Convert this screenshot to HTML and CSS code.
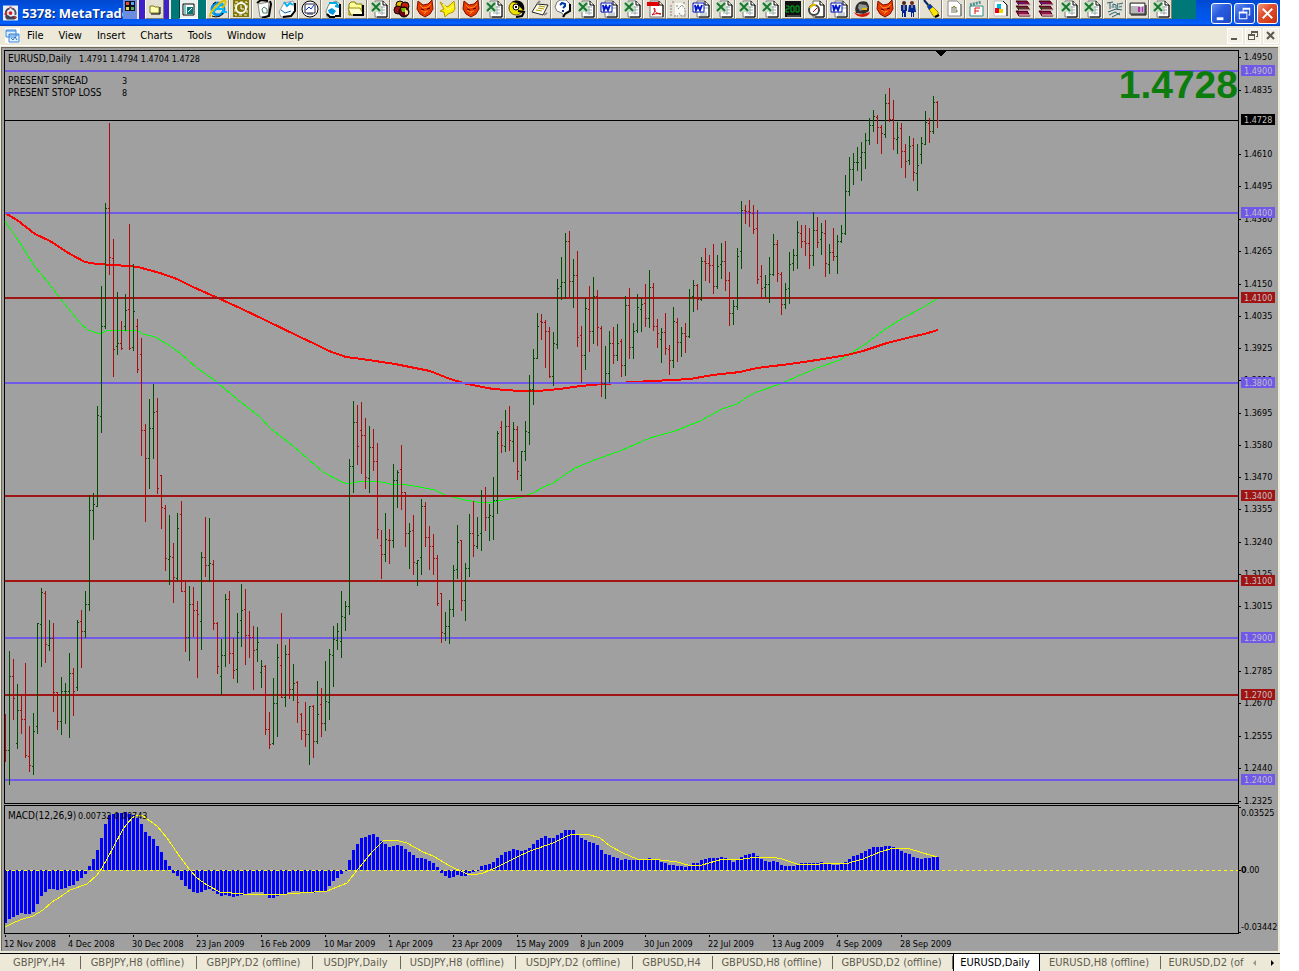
FILE: index.html
```
<!DOCTYPE html>
<html lang="en">
  <head>
    <meta charset="UTF-8">
    <meta name="viewport" content="width=device-width, initial-scale=1.0">
    <title>5378: MetaTrader</title>
    <link rel="stylesheet" href="styles.css">
  </head>

  <body>
    <!-- Icon set for the shortcut bar -->
    <svg class="icon-defs" aria-hidden="true">
      <symbol id="i-ie" viewBox="0 0 18 18"><circle cx="9" cy="9" r="6" fill="none" stroke="#0090e8" stroke-width="3"/><path d="M5 9h9v3h4M3 13L14 3" stroke="#00b8ff" stroke-width="2" fill="none"/><path d="M1 17C0 12 12 0 16 1c2 1-1 5-3 7" stroke="#e0c000" stroke-width="2" fill="none"/><path d="M3 16c5 2 10 0 11-3M4 4l3-2" stroke="#000" fill="none"/></symbol>
      <symbol id="i-clock" viewBox="0 0 18 18"><path d="M1 0h16v17H1z" fill="#807800"/><path d="M3 2h12v13H3z" fill="none" stroke="#fff" stroke-dasharray="3 2"/><circle cx="9" cy="8" r="5" fill="#807800" stroke="#fff" stroke-width="2"/><path d="M9 5v4h3" stroke="#fff" fill="none"/></symbol>
      <symbol id="i-bin" viewBox="0 0 18 18"><path d="M3 4l11-2-1 14-8 1z" fill="#fff" stroke="#888"/><path d="M15 1l1 3-2 12-7 2M2 3l4-3 7 1" fill="none" stroke="#000" stroke-width="2"/><path d="M7 9l2-2 3 2v4H8z" fill="none" stroke="#4a8868"/></symbol>
      <symbol id="i-net" viewBox="0 0 18 18"><path d="M6 3l9-2 2 9-4 6-10 1-2-5z" fill="#fff" stroke="#99a"/><path d="M6 2l3 4 3-3 3 2" stroke="#08b0f0" stroke-width="2" fill="none"/><path d="M3 10l4 3 6-2" stroke="#0066c0" fill="none" stroke-width="1"/><path d="M17 3v8l-4 5-8 1" stroke="#000" stroke-width="2" fill="none"/></symbol>
      <symbol id="i-net2" viewBox="0 0 18 18"><path d="M5 4l7-3 4 3v12l-13 1-1-6z" fill="#fff" stroke="#788"/><path d="M5 3h7l3 4-4-1" stroke="#00a8e8" stroke-width="2" fill="none"/><path d="M4 10l4-2 4 3-3 4-4-2" fill="#0099e0"/><path d="M16 4v12h-5M3 14l3 3h5" stroke="#000" stroke-width="2" fill="none"/></symbol>
      <symbol id="i-chart" viewBox="0 0 18 18"><circle cx="9" cy="9" r="8" fill="#fff" stroke="#000"/><path d="M4 4h10v9H4zM6 14h6" fill="#fff" stroke="#224"/><path d="M5 10l3-3 2 2 3-4" fill="none" stroke="#0038d0"/></symbol>
      <symbol id="i-folder" viewBox="0 0 18 18"><path d="M2 15V4l2-2h4l1 2h6v10z" fill="#ffff9c" stroke="#807800"/><path d="M1 8h12l4 7H4z" fill="#ffffd0" stroke="#998c00"/><path d="M16 5v10H6" stroke="#000" stroke-width="2" fill="none"/></symbol>
      <symbol id="i-excel" viewBox="0 0 18 18"><path d="M5 1h8l4 4v12H5z" fill="#fff" stroke="#777"/><path d="M13 1v4h4v12H7" stroke="#000" fill="none"/><path d="M8 7h7M8 10h7M8 13h7M12 6v9" stroke="#9aa"/><path d="M1 2h10v10H1z" fill="#c8dcc4"/><path d="M2 3l8 8M10 3l-8 8" stroke="#187830" stroke-width="2"/></symbol>
      <symbol id="i-word" viewBox="0 0 18 18"><path d="M5 1h8l4 4v12H5z" fill="#fff" stroke="#777"/><path d="M13 1v4h4v12H7" stroke="#000" fill="none"/><path d="M8 13h7M8 15h7M12 8h4" stroke="#9aa"/><path d="M1 3h11v9H1z" fill="#fff" stroke="#0010b0"/><path d="M3 5l1 5 2-4 2 4 2-5" fill="none" stroke="#0018d0" stroke-width="2"/></symbol>
      <symbol id="i-balls" viewBox="0 0 18 18"><circle cx="7" cy="5" r="4" fill="#e8b800" stroke="#000"/><circle cx="12" cy="6" r="4" fill="#c02010" stroke="#000"/><circle cx="5" cy="10" r="4" fill="#a01010" stroke="#000"/><circle cx="11" cy="12" r="5" fill="#700018" stroke="#000"/><path d="M8 8h5v4H9z" fill="#70c000"/><path d="M12 9l3 2v3l-3 1z" fill="#f0e890"/></symbol>
      <symbol id="i-fox" viewBox="0 0 18 18"><path d="M2 1l5 4 5-1 4-4 1 9-3 5-5 3-5-3-3-5z" fill="#e83800" stroke="#801000"/><path d="M4 5l3 3 5-1 3-3M5 10l3 2 4-1M8 14l2-2" stroke="#ff9020" fill="none"/><path d="M5 9l3 1M11 9l3-1" stroke="#300" stroke-width="1"/></symbol>
      <symbol id="i-foxy" viewBox="0 0 18 18"><path d="M1 2l7 5 3-2 4-4 1 8-2 3-5 2-3 3-1-5-4-1 4-2z" fill="#fff000" stroke="#b09800"/><path d="M4 4l5 6 6-4" stroke="#ff9" fill="none"/></symbol>
      <symbol id="i-bird" viewBox="0 0 18 18"><circle cx="8" cy="8" r="7" fill="#f0e000" stroke="#705800"/><path d="M4 2c6-4 14 0 12 9l-4-4-3-4z" fill="#000"/><circle cx="8" cy="7" r="3" fill="#fff" stroke="#000"/><path d="M8 6v2M10 11l6 1-2 4-6 1" stroke="#000" fill="none" stroke-width="2"/></symbol>
      <symbol id="i-note" viewBox="0 0 18 18"><path d="M1 12L6 4l11 1-5 10z" fill="#fffff0" stroke="#222"/><path d="M5 10l6 1M7 8l6 1M8 6l6 1" stroke="#b09800"/><path d="M6 4l3-3M13 15l3-2" stroke="#888" stroke-width="2"/></symbol>
      <symbol id="i-help" viewBox="0 0 18 18"><path d="M6 0h6l4 4v6l-5 3-1 4-2-4-5-2-2-4 2-5z" fill="#fff" stroke="#777"/><path d="M16 4v7l-5 3-2 3" stroke="#000" fill="none" stroke-width="2"/><path d="M6 5l2-2 3 1v2L9 8M9 10v2" fill="none" stroke="#0038a0" stroke-width="2"/></symbol>
      <symbol id="i-pdf" viewBox="0 0 18 18"><path d="M4 1h9l4 4v12H4z" fill="#fff" stroke="#777"/><path d="M13 1v4h4v12" stroke="#000" fill="none"/><path d="M1 2h12v4H1z" fill="#e00000"/><path d="M6 15c3-3 4-6 2-7 0 4 4 6 7 6-4-1-7 0-9 1z" fill="none" stroke="#d00000"/></symbol>
      <symbol id="i-ghost" viewBox="0 0 18 18"><path d="M6 3h8l2 3v9H6z" fill="#f8f8f4"/><path d="M3 2h2M2 5v12M5 16h4M9 9l4-4 3 4v7M7 6h2M14 3h2M10 13l2 3h5" stroke="#808080" fill="none" stroke-dasharray="2 1"/></symbol>
      <symbol id="i-800" viewBox="0 0 18 18"><path d="M1 1h16v16H1z" fill="#101010"/><path d="M2 6h3v3H2v3h3M7 6h3v6H7zM12 6h3v6h-3z" stroke="#00b020" fill="none"/><path d="M3 16h13" stroke="#777"/></symbol>
      <symbol id="i-gauge" viewBox="0 0 18 18"><path d="M6 1h7l4 4v12H6z" fill="#fff" stroke="#666"/><path d="M13 1v4h4v12H8" stroke="#000" fill="none"/><circle cx="7" cy="10" r="5" fill="#fff" stroke="#444" stroke-width="2"/><path d="M3 8a5 5 0 0 1 6-3" stroke="#e8c000" stroke-width="2" fill="none"/><path d="M6 12l4-4" stroke="#c00"/></symbol>
      <symbol id="i-ball" viewBox="0 0 18 18"><path d="M3 13c-3-8 4-14 11-11l2 4v5l-5 3z" fill="#303030"/><path d="M6 4l7 1 2 3-8 3-2-3z" fill="#909890"/><path d="M1 12c5 4 10 2 16 0-1 6-13 7-16 0z" fill="#d01808"/><path d="M9 9h5" stroke="#e8b800" stroke-width="2"/></symbol>
      <symbol id="i-people" viewBox="0 0 18 18"><circle cx="5" cy="3" r="2" fill="#502810"/><circle cx="13" cy="3" r="2" fill="#702810"/><path d="M2 5h6v6H7v6H5v-4H4v4H3v-6H2zM10 5h6l1 7h-2v5h-1v-4h-1v4h-1v-5H9z" fill="#002890"/><path d="M5 5v5M13 5v3" stroke="#f4c8a0"/></symbol>
      <symbol id="i-brush" viewBox="0 0 18 18"><path d="M2 0l5 6" stroke="#002060" stroke-width="2"/><path d="M5 6l3-2 8 8v4l-4 1z" fill="#ffe800" stroke="#a08000"/><path d="M5 6l3-2 3 3-4 3z" fill="#0038b8"/><path d="M13 17l4-2" stroke="#000" stroke-width="2"/></symbol>
      <symbol id="i-doc" viewBox="0 0 18 18"><path d="M3 1h9l4 4v11H3z" fill="#fff" stroke="#888"/><path d="M6 7h6v6H6z" fill="#b8b8b0"/><path d="M7 8l2-2 2 2M11 11h2" stroke="#807820" fill="none"/><path d="M16 4v12" stroke="#666"/></symbol>
      <symbol id="i-cal" viewBox="0 0 18 18"><path d="M2 6h13v10H2z" fill="#fff" stroke="#388"/><path d="M2 5l11-3" stroke="#4a9090" stroke-width="3" stroke-dasharray="2 1" fill="none"/><path d="M7 14V8h5M7 11h4" stroke="#e81000" stroke-width="1" fill="none"/></symbol>
      <symbol id="i-color" viewBox="0 0 18 18"><path d="M3 1h9l4 4v11H3z" fill="#fff" stroke="#bbb"/><path d="M12 1l4 4v11" stroke="#000" stroke-width="1" fill="none"/><path d="M6 4h4v5H6z" fill="#00b8e0"/><path d="M4 8h4v5H4z" fill="#e80020"/><path d="M8 9h4v4H8z" fill="#e8d800"/></symbol>
      <symbol id="i-books" viewBox="0 0 18 18"><path d="M2 1h11l3 4H5zM2 6h11l3 4H5zM2 11h11l3 5H5z" fill="#a00028" stroke="#300010"/><path d="M5 5h11M5 10h11M5 15h11" stroke="#fff"/><path d="M3 3h9" stroke="#4020a0"/><path d="M3 8h10" stroke="#007020"/><path d="M4 13h9" stroke="#803070"/></symbol>
      <symbol id="i-script" viewBox="0 0 18 18"><path d="M1 3l6-1M4 3v6M7 8V4l3 1v3M12 3l-1 7M13 4l4-1M13 7l3-1M2 12l8-3 6 1M3 15l6-3 5 3M6 17l8-4" stroke="#286070" fill="none" stroke-width="1"/><path d="M3 7h13" stroke="#88a8a8"/></symbol>
      <symbol id="i-pic" viewBox="0 0 18 18"><path d="M1 3h15v11H1z" fill="#b8b8b8" stroke="#303030"/><path d="M2 4h13v2H2z" fill="#fff"/><path d="M9 7h5v5H9z" fill="#b030b0"/><path d="M12 6v6" stroke="#fff"/><path d="M2 15h15V5" stroke="#000" fill="none"/></symbol>
    </svg>

    <div class="window">
      <header class="title-bar">
        <svg class="app-icon" viewBox="0 0 16 16"><path d="M0 0h16v16H0z" fill="#e8ecf4"/><path d="M4 11A5 5 0 0 1 7 3" stroke="#383848" stroke-width="2" fill="none"/><path d="M9 3a5 5 0 0 1 4 7" stroke="#505060" stroke-width="2" fill="none"/><path d="M2 12l3-2 3 2 4-1 3 2-3 2H4z" fill="#404050"/><circle cx="8" cy="8" r="2" fill="#d02020"/><path d="M2 10l2-3M12 12l2 1M8 1v2" stroke="#d03030" stroke-width="2"/></svg>
        <h1 class="title-text">5378: MetaTrader</h1>
        <div class="window-buttons">
          <button class="win-btn" aria-label="Minimize"><svg viewBox="0 0 20 20"><path d="M5 14h7v3H5z" fill="#fff"/></svg></button>
          <button class="win-btn" aria-label="Restore"><svg viewBox="0 0 20 20"><path d="M8 4h8v2H8zM8 6h1v2H8zM15 6h1v6h-2v-1h1zM4 8h9v8H4zm1 2v5h7v-5z" fill="#fff" fill-rule="evenodd"/></svg></button>
          <button class="win-btn close" aria-label="Close"><svg viewBox="0 0 20 20"><path d="M5 5l10 10M15 5L5 15" stroke="#fff" stroke-width="2"/></svg></button>
        </div>
        <div class="shortcut-bar">
          <span class="office-logo"><svg viewBox="0 0 10 10"><path d="M0 0h10v10H0z" fill="#111"/><path d="M1 1h3v3H1z" fill="#e85040"/><path d="M6 1h3v3H6z" fill="#60a0f0"/><path d="M1 6h3v3H1z" fill="#e8d860"/><path d="M6 6h3v3H6z" fill="#50b050"/></svg></span>
          <span class="group purple"><button class="shortcut boxed" aria-label="Folders"><svg viewBox="0 0 18 18"><path d="M4 6h4l1 1h4v6H4z" fill="#ffffb0" stroke="#807820"/><path d="M14 7v7H5" stroke="#000" fill="none"/></svg></button></span>
          <span class="group teal"><button class="shortcut pressed" aria-label="Office"><svg viewBox="0 0 18 18"><path d="M3 4h11v11H3z" fill="#fff" stroke="#000"/><path d="M5 5v9" stroke="#088"/><path d="M7 7h6v7H7z" fill="#007878"/><path d="M8 12l4-4" stroke="#fff"/></svg></button></span>
          <div class="shortcuts" id="shortcuts"></div>
        </div>
      </header>

      <nav class="menu-bar">
        <svg class="menu-icon" viewBox="0 0 15 15"><path d="M0 0h15v15H0z" fill="#fff"/><path d="M1 2h10v7H1zM4 6h10v8H4z" fill="#e0f0ff" stroke="#3a88d8"/><path d="M1 3h10M4 7h10" stroke="#3a88d8"/><path d="M6 10l2 2 2-3 2 3" stroke="#3070c0" fill="none"/></svg>
        <button class="menu-item">File</button>
        <button class="menu-item">View</button>
        <button class="menu-item">Insert</button>
        <button class="menu-item">Charts</button>
        <button class="menu-item">Tools</button>
        <button class="menu-item">Window</button>
        <button class="menu-item">Help</button>
        <div class="child-buttons">
          <button class="child-btn" aria-label="Minimize chart"><svg viewBox="0 0 14 14"><path d="M3 9h6v2H3z"/></svg></button>
          <button class="child-btn" aria-label="Restore chart"><svg viewBox="0 0 14 14"><path d="M5 2h7v6h-2V7h1V4H6v1H5zM2 5h7v6H2zm1 2v3h5V7z" fill-rule="evenodd"/></svg></button>
          <button class="child-btn" aria-label="Close chart"><svg viewBox="0 0 14 14"><path d="M3 3l7 7M10 3l-7 7" stroke="#5c5a50" stroke-width="2"/></svg></button>
        </div>
      </nav>

      <main class="workspace">
        <svg class="pane" id="price-pane" viewBox="4 50 1235 754" preserveAspectRatio="none" role="img" aria-label="EURUSD daily chart"></svg>
        <svg class="axis" id="price-axis" viewBox="1239 50 39 754" preserveAspectRatio="none"></svg>
        <svg class="pane" id="macd-pane" viewBox="4 805 1235 129" preserveAspectRatio="none" role="img" aria-label="MACD"></svg>
        <svg class="axis" id="macd-axis" viewBox="1239 805 39 129" preserveAspectRatio="none"></svg>
        <div class="dates" id="dates"></div>
      </main>

      <footer class="tab-bar">
        <button class="tab">GBPJPY,H4</button>
        <button class="tab">GBPJPY,H8 (offline)</button>
        <button class="tab">GBPJPY,D2 (offline)</button>
        <button class="tab">USDJPY,Daily</button>
        <button class="tab">USDJPY,H8 (offline)</button>
        <button class="tab">USDJPY,D2 (offline)</button>
        <button class="tab">GBPUSD,H4</button>
        <button class="tab">GBPUSD,H8 (offline)</button>
        <button class="tab">GBPUSD,D2 (offline)</button>
        <button class="tab active">EURUSD,Daily</button>
        <button class="tab">EURUSD,H8 (offline)</button>
        <button class="tab last">EURUSD,D2 (of</button>
        <div class="tab-scroll">
          <button class="scroll-btn" aria-label="Previous tabs" disabled><svg viewBox="0 0 8 8"><path d="M5 1v6L2 4z" fill="#9a988c"/></svg></button>
          <button class="scroll-btn" aria-label="Next tabs"><svg viewBox="0 0 8 8"><path d="M3 1v6l3-3z" fill="#000"/></svg></button>
        </div>
      </footer>
    </div>

    <script src="chart.js"></script>
  </body>
</html>
```
FILE: styles.css
```
* {
  box-sizing: border-box;
  margin: 0;
  padding: 0;
}

body {
  background: #fff;
  font-family: "DejaVu Sans Condensed", "DejaVu Sans", sans-serif;
  font-size: 11px;
  padding-right: 19px;
}

button {
  font: inherit;
  border: none;
  background: none;
}

svg {
  display: block;
}

.icon-defs {
  position: absolute;
  width: 0;
  height: 0;
}

.window {
  display: flex;
  flex-direction: column;
  height: 100vh;
  background: #ece9d8;
}

/* Title bar */
.title-bar {
  position: relative;
  display: flex;
  align-items: center;
  height: 26px;
  flex: none;
  padding: 0 2px 0 3px;
  background: linear-gradient(#0048d0 0, #0054e4 40%, #0058f0 80%, #0060ff 90%, #0038b8 100%);
}

.app-icon {
  width: 15px;
  height: 16px;
}

.title-text {
  margin-left: 4px;
  flex: 1;
  font-family: "Open Sans", sans-serif;
  font-size: 13px;
  font-weight: bold;
  line-height: 18px;
  color: #fff;
  text-shadow: 1px 1px #0a2878;
  white-space: nowrap;
}

.window-buttons {
  display: flex;
  gap: 2px;
}

.win-btn {
  width: 21px;
  height: 21px;
  border: 1px solid #fff;
  border-radius: 3px;
  background: linear-gradient(135deg, #6890f0, #2a5ce0 40%, #1c48c8);
}

.win-btn.close {
  background: linear-gradient(135deg, #f09878, #e05030 40%, #c83010);
}

/* Shortcut bar floats over the title bar */
.shortcut-bar {
  position: absolute;
  top: 0;
  left: 123px;
  display: flex;
  height: 19px;
  padding-right: 24px;
  background: #007878;
}

.office-logo {
  width: 14px;
  padding: 1px 2px;
  background: #6c8ce0;
}

.group {
  display: flex;
  justify-content: center;
  border-left: 2px solid #ece9d8;
}

.group.purple {
  width: 32px;
  background: #4020c8;
}

.group.teal {
  width: 37px;
  background: #007878;
}

.shortcuts {
  display: flex;
}

.shortcut {
  width: 23px;
  height: 19px;
  padding: 0 2px;
  background: #e4e1d4;
  border-left: 1px solid #fff;
  border-right: 1px solid #848070;
  border-bottom: 1px solid #848070;
}

.shortcut svg {
  width: 18px;
  height: 18px;
}

.shortcut.boxed,
.shortcut.pressed {
  width: 19px;
  padding: 0;
}

.shortcut.pressed {
  background: #e8f0f0;
  border-color: #003c3c #fff #fff #003c3c;
}

/* Menu bar */
.menu-bar {
  display: flex;
  align-items: center;
  height: 20px;
  flex: none;
  padding-left: 5px;
  border-bottom: 1px solid #fff;
}

.menu-icon {
  width: 15px;
  height: 15px;
}

.menu-item {
  padding: 0 8px 0 7px;
  line-height: 18px;
  color: #000;
}

.child-buttons {
  display: flex;
  gap: 2px;
  margin-left: auto;
  padding-right: 1px;
}

.child-btn {
  width: 16px;
  height: 16px;
  background: #f4f2e8;
  border: 1px solid #fff;
}

.child-btn path {
  fill: #5c5a50;
}

/* Chart workspace */
.workspace {
  display: grid;
  grid-template-columns: 1fr 39px;
  grid-template-rows: 1fr 129px 16px;
  row-gap: 1px;
  flex: 1;
  min-height: 0;
  margin: 1px 2px 2px 1px;
  padding: 2px 0 0 2px;
  background: #a0a0a0;
  border-top: 1px solid #6c6858;
  border-left: 1px solid #6c6858;
}

.pane,
.axis {
  width: 100%;
  height: 100%;
}

.pane {
  min-height: 0;
  shape-rendering: crispEdges;
}

.axis {
  overflow: visible;
  min-height: 0;
}

.pane text,
.axis text {
  font-size: 9px;
}

.pane .caption {
  font-size: 10px;
}

.pane .quote {
  font-family: "Liberation Sans", Arial, sans-serif;
  font-size: 39px;
  font-weight: bold;
  fill: #0c7c0c;
  text-anchor: end;
}

.axis .tag-text {
  fill: #c0c0c0;
}

.frame {
  fill: none;
  stroke: #000;
}

.up {
  fill: none;
  stroke: #004c00;
}

.down {
  fill: none;
  stroke: #a80c0c;
}

.ma-slow {
  fill: none;
  stroke: #f00;
  stroke-width: 2;
}

.ma-fast {
  fill: none;
  stroke: #0f0;
}

.macd-bars {
  fill: #00f;
}

.signal {
  fill: none;
  stroke: #ff0;
}

.zero {
  stroke: #ff0;
  stroke-dasharray: 3 3;
}

.dates {
  display: flex;
  grid-column: 1 / -1;
  overflow: hidden;
  font-size: 9px;
  line-height: 14px;
}

.dates span {
  flex: none;
  width: 64px;
  white-space: nowrap;
}

.dates span::before {
  content: "";
  display: block;
  width: 1px;
  height: 2px;
  margin-left: 1px;
  background: #000;
}

/* Chart tabs */
.tab-bar {
  display: grid;
  grid-template-columns: 81px 116px 116px 88px 115px 117px 80px 120px 120px 87px 121px 90px 1fr;
  height: 18px;
  flex: none;
  border-top: 1px solid #000;
}

.tab {
  position: relative;
  padding-right: 3px;
  color: #5f5c50;
  line-height: 16px;
  white-space: nowrap;
}

.tab::after {
  content: "";
  position: absolute;
  right: 0;
  top: 2px;
  width: 1px;
  height: 13px;
  background: #6c6858;
}

.tab.active {
  background: #fff;
  color: #000;
  border-left: 1px solid #000;
  border-right: 1px solid #000;
}

.tab.last {
  padding-right: 0;
}

.tab.active::after,
.tab.last::after {
  display: none;
}

.tab-scroll {
  display: flex;
  align-items: center;
  gap: 9px;
  justify-content: flex-end;
  padding-right: 6px;
}

.scroll-btn {
  width: 8px;
  height: 8px;
}
```
FILE: chart.js
```
const SHORTCUTS = ('ie clock bin net chart net2 folder excel balls fox foxy fox excel bird note help ' +
  'excel word excel pdf ghost word excel excel excel 800 gauge word ball fox people brush doc cal color ' +
  'books books excel excel script pic excel').split(' ');

// One entry per bar: high, low, open, close, direction (u / d)
const BARS = `714 761 750 750 d;651 784 750 676 u;659 719 676 698 d;684 748 743 710 u;695 733 710 719 d;663 757 719 755 d;
726 771 756 765 d;713 774 766 731 u;623 733 726 623 u;588 666 624 592 u;591 662 593 644 d;620 650 645 638 u;
623 711 638 692 d;692 729 692 721 d;677 734 721 691 u;683 723 691 691 u;653 737 691 673 u;668 715 673 691 d;
620 690 687 622 u;610 667 621 631 d;591 637 631 604 u;495 610 604 510 u;493 539 510 504 u;406 506 506 415 u;
286 432 416 326 u;203 328 326 208 u;123 274 208 257 d;239 376 258 349 d;292 354 346 343 u;321 349 343 348 d;
294 330 326 310 u;224 349 309 348 d;264 350 347 311 u;319 372 326 369 d;338 455 354 430 d;424 521 430 458 d;
399 488 458 428 u;384 458 428 412 u;398 493 411 488 d;475 528 475 507 d;505 570 508 558 d;515 584 559 556 u;
543 602 557 577 d;513 580 578 528 u;501 591 514 591 d;582 651 591 637 d;586 660 637 604 u;587 636 604 610 d;
601 677 610 614 d;552 649 621 557 u;517 576 557 565 d;518 581 565 563 u;560 629 564 623 d;622 673 623 666 d;
639 694 676 655 u;594 666 655 599 u;591 663 599 653 d;638 678 653 670 d;613 682 669 632 u;584 646 620 610 u;
589 664 609 635 d;611 657 635 637 d;626 689 637 650 d;627 661 649 642 u;660 687 672 666 u;665 734 666 729 d;
712 748 729 744 d;678 744 743 703 u;644 736 703 657 u;613 697 665 697 d;645 706 697 654 u;639 698 654 689 d;
664 700 689 683 u;681 722 682 702 d;713 739 714 730 d;702 746 730 734 d;706 764 734 706 u;705 757 706 741 d;
681 743 741 714 u;688 736 704 723 d;661 730 723 701 u;649 719 702 654 u;626 686 655 639 u;623 649 640 631 u;
591 657 641 616 u;601 630 617 606 u;459 614 606 466 u;401 492 466 422 u;405 464 422 446 d;402 473 430 435 d;
418 488 435 477 d;426 492 478 447 u;429 470 447 461 d;443 538 461 529 d;530 578 545 554 d;513 561 554 539 u;
529 563 540 540 d;464 547 540 480 u;470 507 480 472 u;445 509 469 492 d;492 546 492 533 d;523 568 533 531 u;
515 574 530 562 d;560 585 563 560 u;499 574 557 506 u;502 546 506 537 d;526 569 537 546 d;534 574 546 558 d;
555 605 558 603 d;593 642 593 632 d;612 640 633 626 u;600 643 626 609 u;565 616 609 570 u;525 578 569 542 u;
540 610 540 600 d;563 620 600 568 u;514 576 568 533 u;501 556 533 545 d;517 548 546 535 u;490 550 533 495 u;
487 530 495 517 d;504 540 517 515 u;477 539 516 500 u;431 513 500 433 u;421 452 427 445 d;410 451 446 426 u;
406 450 426 440 d;422 461 441 429 u;426 479 429 471 d;451 490 475 451 u;421 460 451 431 u;375 444 432 389 u;
349 404 389 358 u;313 358 358 326 u;314 339 321 322 d;320 367 322 331 d;327 377 331 376 d;332 385 376 343 u;
279 348 344 288 u;257 299 286 282 u;233 298 282 241 u;231 297 241 281 d;259 307 281 275 u;251 346 275 337 d;
326 382 335 355 d;298 369 355 308 u;286 351 309 331 d;277 343 331 296 u;290 345 296 327 d;326 396 328 383 d;
346 398 383 373 u;331 382 373 343 u;327 363 343 355 d;324 360 355 343 u;339 376 341 365 d;296 375 365 305 u;
288 358 305 347 d;323 358 347 331 u;294 332 330 307 u;298 331 309 304 u;284 326 303 318 d;270 327 318 287 u;
283 330 287 326 d;319 347 326 333 d;328 362 339 332 u;313 354 332 348 d;345 374 349 360 d;307 367 360 321 u;
318 361 322 342 d;327 356 342 333 u;323 352 333 336 d;289 337 336 297 u;280 311 296 285 u;284 309 285 299 d;
257 300 299 261 u;248 280 261 263 d;255 282 263 265 d;244 293 265 286 d;255 288 286 266 u;243 278 264 261 u;
241 290 261 280 d;272 325 280 313 d;300 324 313 306 u;248 309 306 256 u;201 268 251 210 u;205 223 210 211 d;
200 226 211 212 d;205 233 213 229 d;210 283 228 279 d;265 297 276 288 d;275 297 287 284 u;257 302 284 274 u;
234 275 274 244 u;240 281 244 273 d;272 314 274 304 d;283 308 304 289 u;252 303 288 264 u;249 270 263 255 u;
221 268 255 232 u;225 247 233 241 d;225 255 241 243 d;228 268 243 255 d;212 265 255 230 u;217 247 230 242 d;
223 254 239 232 u;220 276 233 263 d;244 273 264 252 u;228 260 252 256 d;235 273 256 241 u;225 242 241 233 u;
175 234 233 191 u;157 195 191 169 u;153 184 169 162 u;147 170 162 162 u;142 180 157 152 u;133 168 152 140 u;
118 144 140 125 u;110 131 125 116 u;115 143 117 127 d;125 153 127 133 d;94 137 134 103 u;88 121 103 119 d;
100 149 119 138 d;122 153 139 137 u;123 167 128 151 d;144 177 151 161 d;136 164 160 146 u;138 180 145 172 d;
144 190 173 165 u;137 163 154 143 u;111 144 144 122 u;118 142 123 131 d;96 133 131 102 u;101 127 102 120 d`;

const MACD = [
  923, 919, 917, 915, 913, 914, 914, 912, 904, 896, 892, 889, 889, 890, 889, 888, 886, 885, 881, 878,
  874, 866, 859, 850, 838, 824, 815, 814, 813, 813, 812, 814, 815, 818, 824, 832, 836, 839, 846, 852,
  860, 866, 873, 876, 880, 886, 889, 892, 893, 892, 890, 889, 891, 894, 896, 895, 896, 897, 896, 895,
  894, 893, 892, 892, 892, 895, 898, 898, 896, 895, 894, 892, 891, 891, 892, 893, 893, 893, 892, 892,
  891, 886, 881, 878, 874, 871, 860, 850, 844, 838, 837, 835, 834, 837, 841, 844, 847, 846, 845, 846,
  849, 852, 855, 858, 858, 859, 861, 863, 867, 873, 876, 878, 877, 875, 876, 876, 873, 872, 871, 866,
  865, 864, 862, 858, 855, 852, 851, 849, 850, 851, 850, 848, 844, 840, 838, 836, 838, 838, 835, 833,
  830, 830, 830, 835, 838, 840, 842, 843, 845, 850, 854, 855, 857, 858, 860, 859, 860, 860, 860, 860,
  859, 858, 859, 860, 862, 863, 865, 865, 866, 866, 867, 866, 863, 863, 860, 859, 858, 858, 858, 857,
  858, 860, 862, 860, 857, 855, 854, 853, 856, 859, 861, 862, 861, 862, 865, 866, 866, 866, 865, 863,
  863, 863, 863, 863, 862, 863, 864, 865, 865, 864, 862, 859, 856, 855, 853, 851, 849, 847, 847, 847,
  846, 846, 847, 848, 851, 853, 854, 857, 858, 859, 858, 858, 857, 857
];

const MA_SLOW = '5,213 17,220 35,234 50,241 70,254 85,262 97,264 113,265 128,266 138,267 160,273 177,279 193,287 220,299 240,308 267,321 300,337 315,344 329,351 346,357 362,359 395,364 430,371 450,379 467,384 493,389 520,391 537,391 560,389 580,386 603,384 634,382 653,381 690,379 713,375 740,372 757,368 790,364 817,360 847,355 863,351 887,343 907,338 928,333 938,330';
const MA_FAST = '5,221 20,243 35,267 48,282 60,298 80,323 88,330 97,333 102,333 108,330 138,331 143,334 155,337 167,344 180,353 197,368 213,379 237,399 260,417 270,428 293,446 323,472 340,481 347,484 357,482 377,481 390,484 407,485 420,487 435,490 445,495 453,497 465,500 477,502 493,502 503,500 522,497 533,493 542,488 553,483 575,468 597,459 620,451 650,438 675,431 700,421 722,409 737,404 747,397 757,392 780,384 803,374 817,368 840,360 853,352 867,343 887,328 903,318 920,309 937,299';
const SIGNAL = '5,927 15,922 23,919 33,916 43,910 52,902 60,897 70,890 87,884 97,875 102,868 113,848 123,829 132,818 137,815 143,816 157,826 167,838 180,857 190,870 197,878 207,885 220,892 243,894 287,894 327,891 347,883 358,869 372,852 383,841 395,840 407,843 423,852 433,856 450,866 467,874 478,874 483,873 493,869 505,863 517,857 530,851 553,843 567,836 573,834 587,834 600,838 610,846 623,853 637,859 660,860 677,862 688,865 702,865 723,859 743,859 757,857 772,857 782,859 797,864 820,864 833,863 845,864 863,859 880,852 893,848 907,848 923,853 937,857';

// Support / resistance levels: price, y, color
const VIOLET = '#7058e8';
const MAROON = '#a01414';
const LEVELS = [
  ['1.4900', 71, VIOLET], ['1.4400', 213, VIOLET], ['1.4100', 298, MAROON], ['1.3800', 383, VIOLET],
  ['1.3400', 496, MAROON], ['1.3100', 581, MAROON], ['1.2900', 638, VIOLET], ['1.2700', 695, MAROON],
  ['1.2400', 780, VIOLET]
];

const PRICES = [
  ['1.4950', 57], ['1.4835', 90], ['1.4610', 154], ['1.4495', 186], ['1.4380', 219], ['1.4265', 251],
  ['1.4150', 284], ['1.4035', 316], ['1.3925', 348], ['1.3810', 380], ['1.3695', 413], ['1.3580', 445],
  ['1.3470', 477], ['1.3355', 509], ['1.3240', 542], ['1.3125', 574], ['1.3015', 606], ['1.2785', 671],
  ['1.2670', 703], ['1.2555', 736], ['1.2440', 768], ['1.2325', 801]
];

const DATES = ['12 Nov 2008', '4 Dec 2008', '30 Dec 2008', '23 Jan 2009', '16 Feb 2009', '10 Mar 2009',
  '1 Apr 2009', '23 Apr 2009', '15 May 2009', '8 Jun 2009', '30 Jun 2009', '22 Jul 2009', '13 Aug 2009',
  '4 Sep 2009', '28 Sep 2009'];

function drawPrice() {
  const paths = { u: '', d: '' };
  BARS.split(';').forEach((row, i) => {
    const [high, low, open, close, dir] = row.trim().split(' ');
    const x = 5 + i * 4;
    paths[dir] += `M${x}.5 ${high}V${+low + 1}M${x - 1} ${open}.5h1M${x + 1} ${close}.5h1`;
  });

  const levels = LEVELS.map(([, y, color]) =>
    `<path d="M5 ${y}H1238" stroke="${color}" stroke-width="2"/>`).join('');

  document.getElementById('price-pane').innerHTML = `
    <polyline class="ma-fast" points="${MA_FAST}"/>
    <polyline class="ma-slow" points="${MA_SLOW}"/>
    ${levels}
    <path d="M5 120.5H1238" stroke="#000"/>
    <path class="up" d="${paths.u}"/>
    <path class="down" d="${paths.d}"/>
    <path d="M935 51h11l-5 5h-1z"/>
    <rect class="frame" x="4.5" y="50.5" width="1234" height="753"/>
    <text class="caption" x="8" y="62">EURUSD,Daily</text><text x="79" y="62">1.4791 1.4794 1.4704 1.4728</text>
    <text class="caption" x="8" y="84">PRESENT SPREAD</text><text x="122" y="84">3</text>
    <text class="caption" x="8" y="96">PRESENT STOP LOSS</text><text x="122" y="96">8</text>
    <text class="quote" x="1238" y="98">1.4728</text>`;

  const tag = (price, y, color) =>
    `<rect x="1241" y="${y - 6}" width="34" height="11" fill="${color}"/><text class="tag-text" x="1244" y="${y + 3}">${price}</text>`;

  document.getElementById('price-axis').innerHTML =
    PRICES.map(([price, y]) => `<path d="M1239 ${y}.5h2" stroke="#000"/><text x="1244" y="${y + 3}">${price}</text>`).join('') +
    LEVELS.map(([price, y, color]) => tag(price, y, color)).join('') +
    tag('1.4728', 120, '#000');
}

function drawMacd() {
  let bars = '';
  MACD.forEach((y, i) => {
    const x = 4 + i * 4;
    bars += `M${x} ${y}h3V870h-3z`;
  });

  document.getElementById('macd-pane').innerHTML = `
    <path class="macd-bars" d="${bars}"/>
    <path class="zero" d="M6 870.5H1238"/>
    <polyline class="signal" points="${SIGNAL}"/>
    <rect class="frame" x="4.5" y="805.5" width="1234" height="128"/>
    <text class="caption" x="8" y="819">MACD(12,26,9)</text><text x="78" y="819">0.00732 0.00743</text>`;

  document.getElementById('macd-axis').innerHTML = `
    <path d="M1239 807.5h2M1239 870.5h2M1239 932.5h2" stroke="#000"/>
    <text x="1241" y="816">0.03525</text>
    <text x="1241" y="873"><tspan font-weight="bold">0</tspan>.00</text>
    <text x="1241" y="930">-0.03442</text>`;
}

document.getElementById('shortcuts').innerHTML = SHORTCUTS.map(name =>
  `<button class="shortcut" aria-label="${name}"><svg><use href="#i-${name}"/></svg></button>`).join('');
document.getElementById('dates').innerHTML = DATES.map(date => `<span>${date}</span>`).join('');

drawPrice();
drawMacd();
```
